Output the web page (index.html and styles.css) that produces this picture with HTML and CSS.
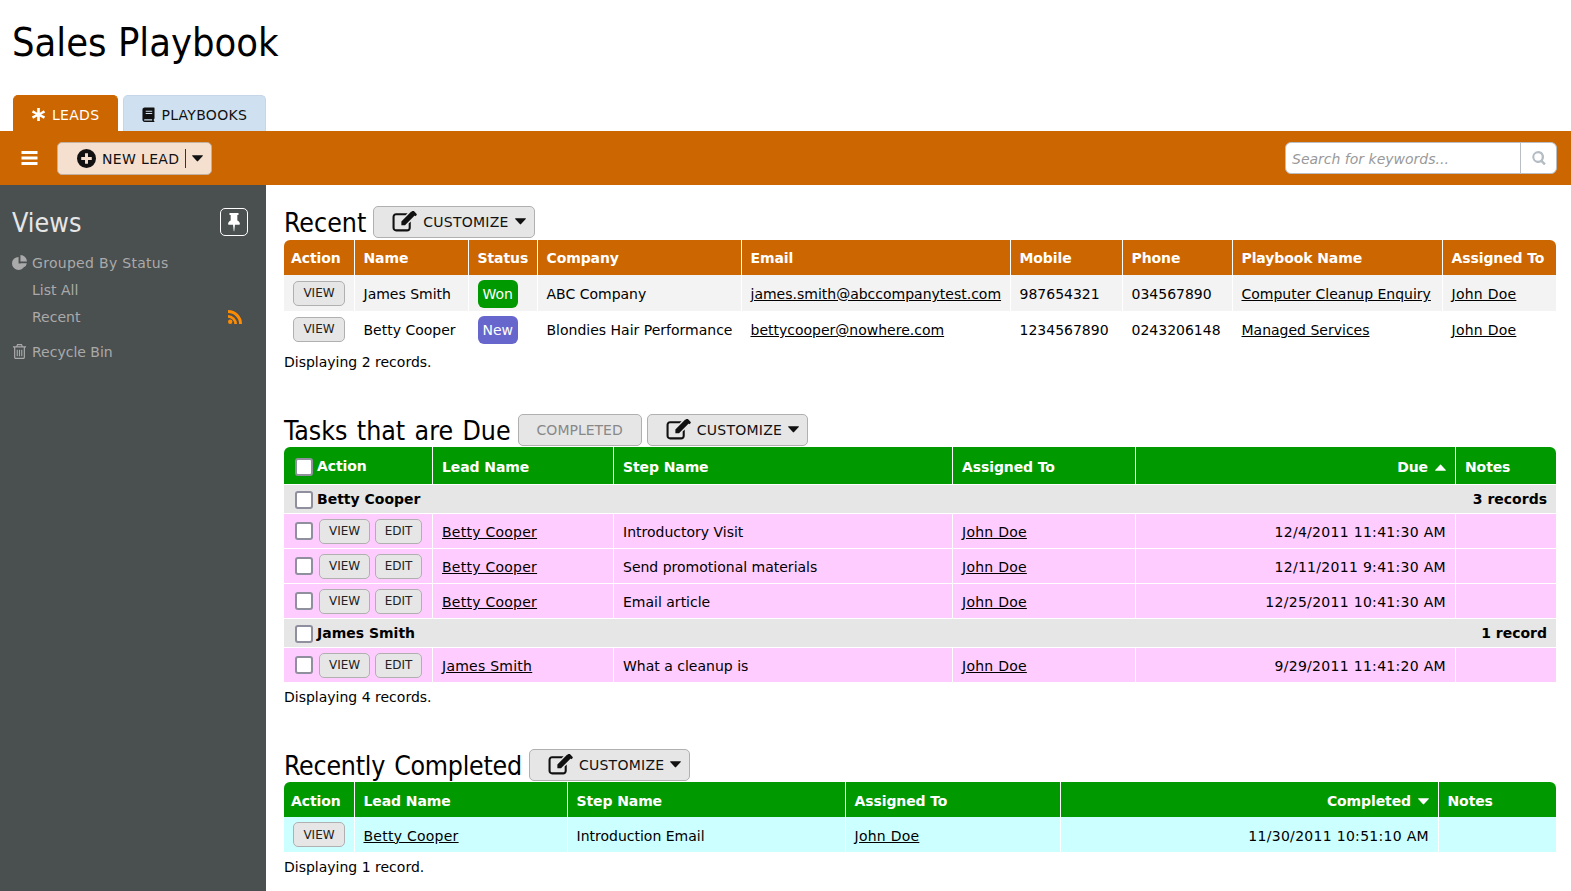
FILE: index.html
```html
<!DOCTYPE html>
<html>
<head>
    <title>Sales Playbook</title>
    <link rel="stylesheet" href="styles.css">
</head>
<body>
    <svg class="sprite" xmlns="http://www.w3.org/2000/svg">
        <symbol id="i-asterisk" viewBox="0 0 16 16"><path d="M6.6 1h2.8v5L13.700 3.500l1.400 2.400L10.800 8l4.300 2.100-1.400 2.400L9.400 10v5H6.600v-5l-4.300 2.500-1.400-2.400L5.200 8 .9 5.900l1.400-2.400L6.600 6z"/></symbol>
        <symbol id="i-book" viewBox="0 0 14 16"><path d="M3 .5h9.500c.8 0 1 .4 1 1V12c0 .5-.3.800-.7 1-.3.400-.3 1.300 0 1.700.4.200.7.400.7.800 0 .3-.3.500-.7.500H3c-1.700 0-2.500-1.200-2.500-2.700V3C.5 1.500 1.300.5 3 .5zM4 4v1h7V4zm0 2.500v1h7v-1zM3 13c-.6 0-.8.400-.8.800s.2.700.8.700h8c-.2-.5-.2-1 0-1.500z"/></symbol>
        <symbol id="i-bars" viewBox="0 0 16 14"><path d="M0 0h16v3H0zM0 5.500h16v3H0zM0 11h16v3H0z"/></symbol>
        <symbol id="i-plus" viewBox="0 0 18 18"><path fill-rule="evenodd" d="M9 0a9 9 0 1 1 0 18A9 9 0 0 1 9 0zM7.600 4v3.600H4v2.800h3.600V14h2.800v-3.600H14V7.600h-3.600V4z"/></symbol>
        <symbol id="i-caret" viewBox="0 0 10 6"><path d="M.5 0h9c.4 0 .6.500.3.800L5.300 5.600c-.2.200-.5.200-.7 0L.2.800C-.1.500.1 0 .5 0z"/></symbol>
        <symbol id="i-edit" viewBox="0 0 24 20"><path d="M4 2h11l-2 2H4c-.9 0-1.500.6-1.500 1.500v10.500c0 .9.600 1.500 1.500 1.500h10.500c.9 0 1.500-.6 1.500-1.500v-4l2-2v6c0 2.200-1.500 3.500-3.500 3.500H4C2 19.500.5 18 .5 16V5.500C.5 3.500 2 2 4 2z"/><path d="M18.500.5l3.500 3.500-9.500 9.500H9v-3.500zM19.500 0c.5-.4 1-.4 1.500 0l2.500 2.500c.4.500.4 1 0 1.500l-1 1L18.500 1z"/></symbol>
        <symbol id="i-pin" viewBox="0 0 14 20"><path d="M3 0h8c.6 0 1 .4 1 1s-.4 1-1 1h-.5v6c1.500.7 2.700 2 2.700 3.500 0 .5-.3.800-.8.800H8l-.7 6.700c0 .3-.6.300-.6 0L6 12.300H1.500c-.5 0-.7-.3-.7-.8C.8 10 2 8.700 3.500 8V2H3c-.6 0-1-.4-1-1s.4-1 1-1z"/></symbol>
        <symbol id="i-pie" viewBox="0 0 16 16"><path d="M7 2v7h7a7 7 0 1 1-7-7zM9 0a7 7 0 0 1 7 7H9zM9 8.800h6.800c-.3 1.500-1.100 2.900-2.200 4z"/></symbol>
        <symbol id="i-rss" viewBox="0 0 14 14"><circle cx="2.200" cy="11.800" r="2.200"/><path d="M0 5a9 9 0 0 1 9 9H6.200A6.200 6.200 0 0 0 0 7.800z"/><path d="M0 0a14 14 0 0 1 14 14h-2.900A11.100 11.100 0 0 0 0 2.900z"/></symbol>
        <symbol id="i-trash" viewBox="0 0 14 16"><path fill-rule="evenodd" d="M4.500 0h5l1 2.500H14v1.300h-1.200V14c0 1.200-.8 2-1.800 2H3c-1 0-1.800-.8-1.800-2V3.800H0V2.500h3.500zM5.200 1.200l-.4 1.300h4.400l-.4-1.300zM2.500 3.800V14c0 .4.200.7.500.7h8c.3 0 .5-.3.500-.7V3.800zM4 6h1.200v7H4zm2.400 0h1.200v7H6.400zm2.400 0H10v7H8.800z"/></symbol>
        <symbol id="i-search" viewBox="0 0 14 14"><path fill-rule="evenodd" d="M6 0a6 6 0 0 1 4.800 9.600l3 3-1.700 1.700-3-3A6 6 0 1 1 6 0zm0 2.300a3.700 3.700 0 1 0 0 7.400 3.700 3.700 0 0 0 0-7.400z"/></symbol>
    </svg>

    <h1 class="app-title">Sales Playbook</h1>

    <div class="tabs">
        <a class="tab active"><svg class="icon tab-icon"><use href="#i-asterisk"/></svg>LEADS</a>
        <a class="tab"><svg class="icon tab-icon book"><use href="#i-book"/></svg>PLAYBOOKS</a>
    </div>

    <div class="toolbar">
        <svg class="icon menu-icon"><use href="#i-bars"/></svg>
        <button class="new-lead"><svg class="icon plus-icon"><use href="#i-plus"/></svg><span>NEW LEAD</span><i class="split"></i><svg class="icon caret"><use href="#i-caret"/></svg></button>
        <div class="search">
            <span class="search-text">Search for keywords...</span>
            <span class="search-btn"><svg class="icon"><use href="#i-search"/></svg></span>
        </div>
    </div>

    <div class="main">
        <div class="sidebar">
            <div class="views-head">
                <h2>Views</h2>
                <span class="pin"><svg class="icon"><use href="#i-pin"/></svg></span>
            </div>
            <a class="nav-item wide"><svg class="icon"><use href="#i-pie"/></svg>Grouped By Status</a>
            <a class="nav-item sub">List All</a>
            <a class="nav-item sub">Recent<svg class="icon rss"><use href="#i-rss"/></svg></a>
            <a class="nav-item bin"><svg class="icon"><use href="#i-trash"/></svg>Recycle Bin</a>
        </div>

        <div class="content">
            <div class="section">
                <div class="section-head">
                    <h2>Recent</h2>
                    <button class="btn"><svg class="icon edit"><use href="#i-edit"/></svg>CUSTOMIZE<svg class="icon caret"><use href="#i-caret"/></svg></button>
                </div>
                <table class="grid orange recent">
                    <colgroup><col class="c1"><col class="c2"><col class="c3"><col class="c4"><col class="c5"><col class="c6"><col class="c7"><col class="c8"><col class="c9"></colgroup>
                    <tr><th>Action</th><th>Name</th><th>Status</th><th>Company</th><th>Email</th><th>Mobile</th><th>Phone</th><th>Playbook Name</th><th>Assigned To</th></tr>
                    <tr class="alt">
                        <td class="center"><button class="mini">VIEW</button></td><td>James Smith</td><td><span class="badge won">Won</span></td><td>ABC Company</td><td><a href="#">james.smith@abccompanytest.com</a></td><td>987654321</td><td>034567890</td><td><a href="#">Computer Cleanup Enquiry</a></td><td><a class="person" href="#">John Doe</a></td>
                    </tr>
                    <tr>
                        <td class="center"><button class="mini">VIEW</button></td><td>Betty Cooper</td><td><span class="badge new">New</span></td><td>Blondies Hair Performance</td><td><a href="#">bettycooper@nowhere.com</a></td><td>1234567890</td><td>0243206148</td><td><a href="#">Managed Services</a></td><td><a class="person" href="#">John Doe</a></td>
                    </tr>
                </table>
                <p class="count">Displaying 2 records.</p>
            </div>

            <div class="section">
                <div class="section-head">
                    <h2>Tasks that are Due</h2>
                    <button class="btn disabled">COMPLETED</button>
                    <button class="btn"><svg class="icon edit"><use href="#i-edit"/></svg>CUSTOMIZE<svg class="icon caret"><use href="#i-caret"/></svg></button>
                </div>
                <table class="grid green due">
                    <colgroup><col class="c1"><col class="c2"><col class="c3"><col class="c4"><col class="c5"><col class="c6"></colgroup>
                    <tr class="due-head"><th class="act"><span class="check-wrap"><i class="check"></i>Action</span></th><th>Lead Name</th><th>Step Name</th><th>Assigned To</th><th class="right">Due<svg class="icon caret up"><use href="#i-caret"/></svg></th><th>Notes</th></tr>
                    <tr class="group"><td colspan="5" class="act"><span class="check-wrap"><i class="check"></i>Betty Cooper</span></td><td class="right">3 records</td></tr>
                    <tr class="pink">
                        <td class="act"><span class="check-wrap"><i class="check"></i><button class="mini">VIEW</button><button class="mini">EDIT</button></span></td><td><a class="person" href="#">Betty Cooper</a></td><td>Introductory Visit</td><td><a class="person" href="#">John Doe</a></td><td class="right date">12/4/2011 11:41:30 AM</td><td></td>
                    </tr>
                    <tr class="pink">
                        <td class="act"><span class="check-wrap"><i class="check"></i><button class="mini">VIEW</button><button class="mini">EDIT</button></span></td><td><a class="person" href="#">Betty Cooper</a></td><td>Send promotional materials</td><td><a class="person" href="#">John Doe</a></td><td class="right date">12/11/2011 9:41:30 AM</td><td></td>
                    </tr>
                    <tr class="pink">
                        <td class="act"><span class="check-wrap"><i class="check"></i><button class="mini">VIEW</button><button class="mini">EDIT</button></span></td><td><a class="person" href="#">Betty Cooper</a></td><td>Email article</td><td><a class="person" href="#">John Doe</a></td><td class="right date">12/25/2011 10:41:30 AM</td><td></td>
                    </tr>
                    <tr class="group"><td colspan="5" class="act"><span class="check-wrap"><i class="check"></i>James Smith</span></td><td class="right">1 record</td></tr>
                    <tr class="pink">
                        <td class="act"><span class="check-wrap"><i class="check"></i><button class="mini">VIEW</button><button class="mini">EDIT</button></span></td><td><a class="person" href="#">James Smith</a></td><td>What a cleanup is</td><td><a class="person" href="#">John Doe</a></td><td class="right date">9/29/2011 11:41:20 AM</td><td></td>
                    </tr>
                </table>
                <p class="count">Displaying 4 records.</p>
            </div>

            <div class="section">
                <div class="section-head">
                    <h2 class="tight">Recently Completed</h2>
                    <button class="btn"><svg class="icon edit"><use href="#i-edit"/></svg>CUSTOMIZE<svg class="icon caret"><use href="#i-caret"/></svg></button>
                </div>
                <table class="grid green completed">
                    <colgroup><col class="c1"><col class="c2"><col class="c3"><col class="c4"><col class="c5"><col class="c6"></colgroup>
                    <tr><th>Action</th><th>Lead Name</th><th>Step Name</th><th>Assigned To</th><th class="right">Completed<svg class="icon caret"><use href="#i-caret"/></svg></th><th>Notes</th></tr>
                    <tr class="cyan">
                        <td class="center"><button class="mini">VIEW</button></td><td><a class="person" href="#">Betty Cooper</a></td><td>Introduction Email</td><td><a class="person" href="#">John Doe</a></td><td class="right date">11/30/2011 10:51:10 AM</td><td></td>
                    </tr>
                </table>
                <p class="count">Displaying 1 record.</p>
            </div>
        </div>
    </div>
</body>
</html>
```

FILE: styles.css
```css
html, body {
    height: 100%;
}

body {
    margin: 0;
    display: flex;
    flex-direction: column;
    overflow: hidden;
    font-family: "DejaVu Sans", sans-serif;
    font-size: 14px;
    color: #000;
    background: #fff;
}

.sprite {
    display: none;
}

.icon {
    width: 16px;
    height: 16px;
    fill: currentColor;
    flex: none;
}

.app-title {
    margin: 0;
    padding: 16px 12px 0;
    height: 79px;
    box-sizing: border-box;
    font-family: "DejaVu Sans Condensed", "DejaVu Sans", sans-serif;
    font-size: 39.500px;
    font-weight: normal;
    line-height: 52px;
}

/* tabs */
.tabs {
    display: flex;
    gap: 5px;
    padding: 16px 0 0 13px;
    height: 52px;
    box-sizing: border-box;
}

.tab {
    display: flex;
    align-items: center;
    padding: 2px 18px 0 17px;
    border: 1px solid #c5d6e6;
    border-bottom: none;
    border-radius: 5px 5px 0 0;
    background: #cfe0f0;
    color: #111;
    letter-spacing: 0.3px;
}

.tab.active {
    background: #cc6600;
    border-color: #cc6600;
    color: #fff;
}

.tab-icon {
    width: 15px;
    height: 15px;
    margin-right: 6px;
}

.tab-icon.book {
    width: 13px;
    margin-left: 1px;
}

/* toolbar */
.toolbar {
    display: flex;
    align-items: center;
    height: 54px;
    padding: 0 14px 0 21px;
    background: #cc6600;
}

.menu-icon {
    width: 17px;
    height: 14px;
    color: #fff;
}

.new-lead {
    display: flex;
    align-items: center;
    height: 33px;
    margin-left: 19px;
    padding: 1px 8px 0 19px;
    border: 1px solid #c2b0a0;
    border-radius: 5px;
    background: #f5e0d0;
    font: inherit;
    letter-spacing: 0.35px;
    color: #111;
}

.plus-icon {
    width: 19px;
    height: 19px;
    margin-right: 6px;
}

.split {
    width: 1px;
    height: 19px;
    margin: 0 6px;
    background: #333;
}

.caret {
    width: 11px;
    height: 7px;
}

.search {
    display: flex;
    align-items: center;
    height: 32px;
    width: 272px;
    margin-left: auto;
    background: #fff;
    border: 1px solid #b8bec4;
    border-radius: 6px;
    box-sizing: border-box;
}

.search-text {
    flex: 1;
    padding: 1px 0 0 6px;
    color: #999;
    font-style: italic;
}

.search-btn {
    display: flex;
    align-items: center;
    justify-content: center;
    width: 35px;
    height: 100%;
    border-left: 1px solid #b8bec4;
    color: #b4bcc4;
}

.search-btn .icon {
    width: 14px;
    height: 14px;
}

/* main */
.main {
    flex: 1;
    display: flex;
    min-height: 0;
}

.sidebar {
    width: 266px;
    flex: none;
    box-sizing: border-box;
    padding: 20px 12px;
    background: #4a4f50;
    color: #aaa;
}

.views-head {
    display: flex;
    justify-content: space-between;
    align-items: center;
    height: 34px;
    margin-bottom: 10px;
}

.views-head h2 {
    margin: 0;
    font-family: "DejaVu Sans Condensed", "DejaVu Sans", sans-serif;
    font-size: 26.700px;
    font-weight: normal;
    color: #e6e6e6;
}

.pin {
    display: flex;
    align-items: center;
    justify-content: center;
    width: 26px;
    height: 26px;
    margin-right: 6px;
    border: 1px solid #fff;
    border-radius: 5px;
    color: #fff;
}

.pin .icon {
    height: 19px;
}

.nav-item {
    display: flex;
    align-items: center;
    height: 27px;
}

.nav-item.wide {
    letter-spacing: 0.3px;
}

.nav-item .icon {
    width: 15px;
    height: 15px;
    margin-right: 5px;
}

.nav-item.sub {
    padding-left: 20px;
}

.nav-item.bin {
    margin-top: 8px;
}

.nav-item .rss {
    width: 14px;
    height: 14px;
    margin: 0 12px 0 auto;
    color: #ff8c00;
}

/* content */
.content {
    flex: 1;
    min-width: 0;
    padding: 20px 15px 0 18px;
}

.section {
    margin-bottom: 43px;
}

.section-head {
    display: flex;
    align-items: center;
    gap: 7px;
    height: 35px;
}

.section + .section .section-head {
    height: 34px;
    padding-top: 1px;
    box-sizing: border-box;
}

.section-head h2 {
    margin: 0;
    font-family: "DejaVu Sans Condensed", "DejaVu Sans", sans-serif;
    font-size: 26.500px;
    font-weight: normal;
    word-spacing: 1.800px;
}

.section-head h2.tight {
    letter-spacing: -0.25px;
}

.btn {
    display: flex;
    align-items: center;
    height: 32px;
    margin-bottom: 2px;
    padding: 0 8px 0 18px;
    border: 1px solid #b0b0b0;
    border-radius: 5px;
    background: #e6e6e6;
    font: inherit;
    letter-spacing: 0.25px;
    color: #111;
}

.btn.disabled {
    margin-right: -2px;
    padding: 0 18px;
    letter-spacing: 0;
    color: #888;
}

.btn .edit {
    width: 25px;
    height: 21px;
    margin-right: 6px;
}

.btn .caret {
    margin-left: 6px;
}

.grid {
    width: 100%;
    table-layout: fixed;
    border-collapse: separate;
    border-spacing: 0;
}

.grid th {
    height: 35px;
    padding: 0 10px 0 8.500px;
    text-align: left;
    color: #fff;
    border-left: 1px solid #fff;
    box-sizing: border-box;
    white-space: nowrap;
    letter-spacing: -0.1px;
}

.grid th:first-child {
    padding-left: 7px;
    border-left: none;
    border-top-left-radius: 6px;
}

.grid th:last-child {
    border-top-right-radius: 6px;
}

.orange th {
    background: #cc6600;
}

.green th {
    padding-top: 2px;
    background: #009900;
}

.grid td {
    height: 36px;
    padding: 2px 10px 0 8.500px;
    border-left: 1px solid #fff;
    box-sizing: border-box;
    white-space: nowrap;
}

.due th, .due td {
    padding-left: 9px;
}

.grid td:first-child {
    border-left: none;
}

.grid a {
    color: #000;
}

.grid a.person {
    letter-spacing: 0.25px;
}

.grid .right {
    padding-right: 9px;
    text-align: right;
}

.grid .date {
    letter-spacing: 0.3px;
}

.grid .center {
    text-align: center;
    padding: 0;
}

.grid th.act, .grid td.act {
    padding: 0 0 0 11px;
}

.alt td {
    background: #f3f3f3;
}

.group td {
    height: 29px;
    padding-top: 0;
    background: #e6e6e6;
    font-weight: bold;
    border-left: none;
    border-top: 1px solid #fff;
}

.pink td {
    height: 35px;
    background: #ffccff;
    border-top: 1px solid #fff;
}

.cyan td {
    height: 35px;
    background: #ccffff;
}

.due-head th {
    height: 37px;
}

.check-wrap {
    display: flex;
    align-items: center;
    gap: 4px;
}

.check {
    display: block;
    width: 14px;
    height: 14px;
    border: 2px solid #8f8f9d;
    border-radius: 3px;
    background: #fff;
}

.due-head .check {
    margin-top: 3px;
}

.group .check {
    margin-top: 2px;
}

.caret.up {
    transform: rotate(180deg);
}

.right .caret {
    margin-left: 7px;
    vertical-align: 1px;
}

.mini {
    height: 25px;
    padding: 0 9px;
    border: 1px solid #b0b0b0;
    border-radius: 5px;
    background: #e6e6e6;
    font: inherit;
    font-size: 12px;
    color: #222;
}

.check + .mini {
    margin-left: 2px;
}

.mini + .mini {
    margin-left: 1px;
    padding: 0 8.500px;
}

.badge {
    display: inline-block;
    padding: 6px 5px;
    border-radius: 6px;
    color: #fff;
}

.won {
    background: #009900;
}

.new {
    background: #6666cc;
}

.count {
    margin: 7px 0 0;
}

/* column widths */
.recent .c1 { width: 70px; }
.recent .c2 { width: 114px; }
.recent .c3 { width: 69px; }
.recent .c4 { width: 204px; }
.recent .c5 { width: 269px; }
.recent .c6 { width: 112px; }
.recent .c7 { width: 110px; }
.recent .c8 { width: 210px; }

.due .c1 { width: 148px; }
.due .c2 { width: 181px; }
.due .c3 { width: 339px; }
.due .c4 { width: 183px; }
.due .c5 { width: 320px; }

.completed .c1 { width: 70px; }
.completed .c2 { width: 213px; }
.completed .c3 { width: 278px; }
.completed .c4 { width: 215px; }
.completed .c5 { width: 378px; }
```
